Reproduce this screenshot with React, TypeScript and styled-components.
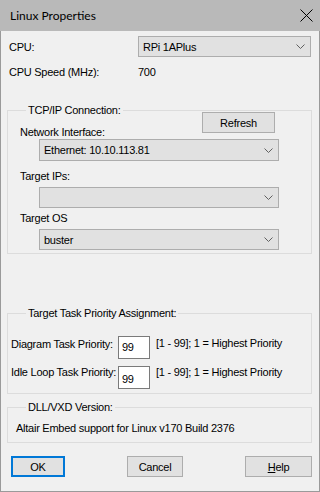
import React from "react";
import styled, { createGlobalStyle } from "styled-components";

const Global = createGlobalStyle`
  html, body { margin: 0; padding: 0; background: #f0f0f0; }
  body { font-family: "Liberation Sans", Arial, sans-serif; font-size: 11px; letter-spacing: -0.25px; color: #000; white-space: nowrap; }
  * { box-sizing: border-box; }
`;

const Window = styled.div`
  width: 320px;
  height: 492px;
  background: #f0f0f0;
  border: 1px solid #9a9a9a;
  border-top: none;
  display: flex;
  flex-direction: column;
`;

const TitleBar = styled.div`
  height: 31px;
  margin: 0 -1px;
  background: #b9b9b9;
  display: flex;
  align-items: center;
  justify-content: space-between;
  padding: 0 7px 0 10px;
  font-family: Lato, "Noto Sans", sans-serif;
  font-size: 12px;
  letter-spacing: 0;
  color: #000;
`;

const CloseBtn = styled.div`
  width: 14px;
  height: 14px;
  display: flex;
  align-items: center;
  justify-content: center;
`;

const Body = styled.div`
  flex: 1;
  padding: 5px 7px 0 6px;
  display: flex;
  flex-direction: column;
`;

const TopRow = styled.div<{ $h: number; $mt?: number }>`
  display: flex;
  align-items: center;
  height: ${(p) => p.$h}px;
  margin-top: ${(p) => p.$mt ?? 0}px;
  padding-left: 2px;
`;

const TopLabel = styled.span`
  width: 131px;
  flex: none;
`;

const ComboBox = styled.div<{ $w: number; $ml?: number; $h?: number; $mt?: number }>`
  width: ${(p) => p.$w}px;
  height: ${(p) => p.$h ?? 21}px;
  margin-left: ${(p) => p.$ml ?? 0}px;
  margin-top: ${(p) => p.$mt ?? 0}px;
  background: #e1e1e1;
  border: 1px solid #adadad;
  display: flex;
  align-items: center;
  justify-content: space-between;
  padding: 0 5px 0 4px;
  flex: none;
`;

const Chevron = () => (
  <svg width="9" height="5" viewBox="0 0 9 5">
    <path d="M0.5 0.5 L4.5 4.5 L8.5 0.5" fill="none" stroke="#606060" strokeWidth="1" />
  </svg>
);

const Group = styled.fieldset<{ $mt: number; $h: number }>`
  margin: ${(p) => p.$mt}px 0 0 0;
  padding: 0 0 0 12px;
  border: 1px solid #dcdcdc;
  height: ${(p) => p.$h}px;
  min-width: 0;
`;

const Legend = styled.legend`
  padding: 0 2px;
  margin-left: 6px;
  line-height: 14px;
  height: 14px;
`;

const NetRow = styled.div`
  display: flex;
  align-items: flex-start;
  margin-top: -5px;
  height: 27px;
`;

const FieldLabel = styled.div<{ $mt?: number; $w?: number }>`
  line-height: 14px;
  height: 14px;
  margin-top: ${(p) => p.$mt ?? 0}px;
  width: ${(p) => (p.$w ? `${p.$w}px` : "auto")};
  flex: none;
`;

const PushButton = styled.button<{ $w: number; $default?: boolean }>`
  width: ${(p) => p.$w}px;
  height: 21px;
  background: #e1e1e1;
  border: ${(p) => (p.$default ? "2px solid #0078d7" : "1px solid #adadad")};
  font-family: "Liberation Sans", Arial, sans-serif;
  font-size: 11px;
  letter-spacing: -0.25px;
  color: #000;
  padding: 0;
  margin: 0;
  flex: none;
`;

const PriRow = styled.div<{ $mt: number }>`
  display: flex;
  align-items: flex-start;
  margin-top: ${(p) => p.$mt}px;
  margin-left: -9px;
`;

const EditBox = styled.div<{ $pt: number }>`
  width: 32px;
  height: 23px;
  background: #fff;
  border: 1px solid #7a7a7a;
  padding: ${(p) => p.$pt}px 0 0 3px;
  line-height: 14px;
  flex: none;
`;

const Hint = styled.span<{ $mt?: number }>`
  margin-left: 6px;
  margin-top: ${(p) => p.$mt ?? 0}px;
  line-height: 14px;
`;

const Plain = styled.div<{ $mt: number }>`
  margin-top: ${(p) => p.$mt}px;
  margin-left: -4px;
  line-height: 14px;
`;

const ButtonBar = styled.div`
  display: flex;
  align-items: center;
  justify-content: space-between;
  margin-top: 13px;
  padding-left: 4px;
`;

const Value = styled.span`
  margin-left: -2px;
`;

export default function App() {
  return (
    <>
      <Global />
      <Window>
        <TitleBar>
          <span>Linux Properties</span>
          <CloseBtn>
            <svg width="13" height="13" viewBox="0 0 13 13">
              <path d="M0.5 0.5 L12.5 12.5 M12.5 0.5 L0.5 12.5" stroke="#000" strokeWidth="1" />
            </svg>
          </CloseBtn>
        </TitleBar>
        <Body>
          <TopRow $h={21}>
            <TopLabel>CPU:</TopLabel>
            <ComboBox $w={173} $ml={-2}>
              <span>RPi 1APlus</span>
              <Chevron />
            </ComboBox>
          </TopRow>
          <TopRow $h={20} $mt={5}>
            <TopLabel>CPU Speed (MHz):</TopLabel>
            <Value>700</Value>
          </TopRow>

          <Group $mt={21} $h={151}>
            <Legend>TCP/IP Connection:</Legend>
            <NetRow>
              <FieldLabel $mt={13} $w={182}>Network Interface:</FieldLabel>
              <PushButton $w={73}>Refresh</PushButton>
            </NetRow>
            <ComboBox $w={240} $ml={19} $h={22}>
              <span>Ethernet: 10.10.113.81</span>
              <Chevron />
            </ComboBox>
            <FieldLabel $mt={8}>Target IPs:</FieldLabel>
            <ComboBox $w={240} $ml={19} $h={21} $mt={4}>
              <span></span>
              <Chevron />
            </ComboBox>
            <FieldLabel $mt={3}>Target OS</FieldLabel>
            <ComboBox $w={240} $ml={19} $h={21} $mt={4}>
              <span>buster</span>
              <Chevron />
            </ComboBox>
          </Group>

          <Group $mt={52} $h={88}>
            <Legend>Target Task Priority Assignment:</Legend>
            <PriRow $mt={16}>
              <FieldLabel $mt={1} $w={107}>Diagram Task Priority:</FieldLabel>
              <EditBox $pt={3}>99</EditBox>
              <Hint>[1 - 99]; 1 = Highest Priority</Hint>
            </PriRow>
            <PriRow $mt={7}>
              <FieldLabel $mt={-1} $w={107}>Idle Loop Task Priority:</FieldLabel>
              <EditBox $pt={5}>99</EditBox>
              <Hint $mt={-1}>[1 - 99]; 1 = Highest Priority</Hint>
            </PriRow>
          </Group>

          <Group $mt={6} $h={43}>
            <Legend>DLL/VXD Version:</Legend>
            <Plain $mt={7}>Altair Embed support for Linux v170 Build 2376</Plain>
          </Group>

          <ButtonBar>
            <PushButton $w={54} $default>OK</PushButton>
            <PushButton $w={56}>Cancel</PushButton>
            <PushButton $w={67}>
              <u>H</u>elp
            </PushButton>
          </ButtonBar>
        </Body>
      </Window>
    </>
  );
}
